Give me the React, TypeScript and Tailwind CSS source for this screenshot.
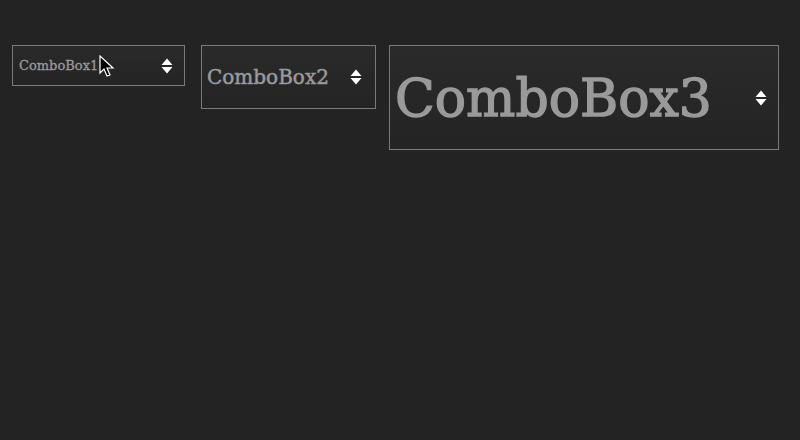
import { useState } from "react"

const font = { fontFamily: '"DejaVu Serif", "Liberation Serif", serif' }

function Arrows() {
  return (
    <svg width="12" height="16" viewBox="0 0 12 16" className="shrink-0">
      <path d="M6 0.5 L11.5 7 L0.5 7 Z" fill="#ffffff" />
      <path d="M0.5 9 L11.5 9 L6 15.5 Z" fill="#ffffff" />
    </svg>
  )
}

interface ComboProps {
  label: string
  className: string
  textClass: string
}

function ComboBox({ label, className, textClass }: ComboProps) {
  const [value] = useState(label)
  return (
    <div
      className={`flex items-center justify-between border border-[#7a7a7a] bg-gradient-to-b from-[#2a2a2a] to-[#242424] ${className}`}
    >
      <span className={`text-[#9a9a9a] leading-none whitespace-nowrap ${textClass}`} style={font}>
        {value}
      </span>
      <Arrows />
    </div>
  )
}

export default function App() {
  return (
    <div className="relative w-[800px] h-[440px] bg-[#232323] overflow-hidden">
      <div className="flex items-start pt-[45px] pl-[12px]">
        <ComboBox
          label="ComboBox1"
          className="w-[173px] h-[41px] pl-[6px] pr-[11px]"
          textClass="text-[13px] [-webkit-text-stroke:0.3px_#9a9a9a]"
        />
        <ComboBox
          label="ComboBox2"
          className="ml-[16px] w-[175px] h-[64px] pl-[5px] pr-[13px]"
          textClass="text-[20px] [-webkit-text-stroke:0.5px_#9a9a9a]"
        />
        <ComboBox
          label="ComboBox3"
          className="ml-[13px] w-[390px] h-[105px] pl-[5px] pr-[11px]"
          textClass="text-[52px] [-webkit-text-stroke:1.4px_#9a9a9a]"
        />
      </div>

      {/* mouse cursor */}
      <svg className="absolute left-[99px] top-[55px]" width="17" height="24" viewBox="0 0 17 24">
        <path d="M1 1 L1 18 L5 14 L8 21 L11 20 L8 13 L14 13 Z" fill="#000000" stroke="#ffffff" strokeWidth="1.2" />
      </svg>
    </div>
  )
}
